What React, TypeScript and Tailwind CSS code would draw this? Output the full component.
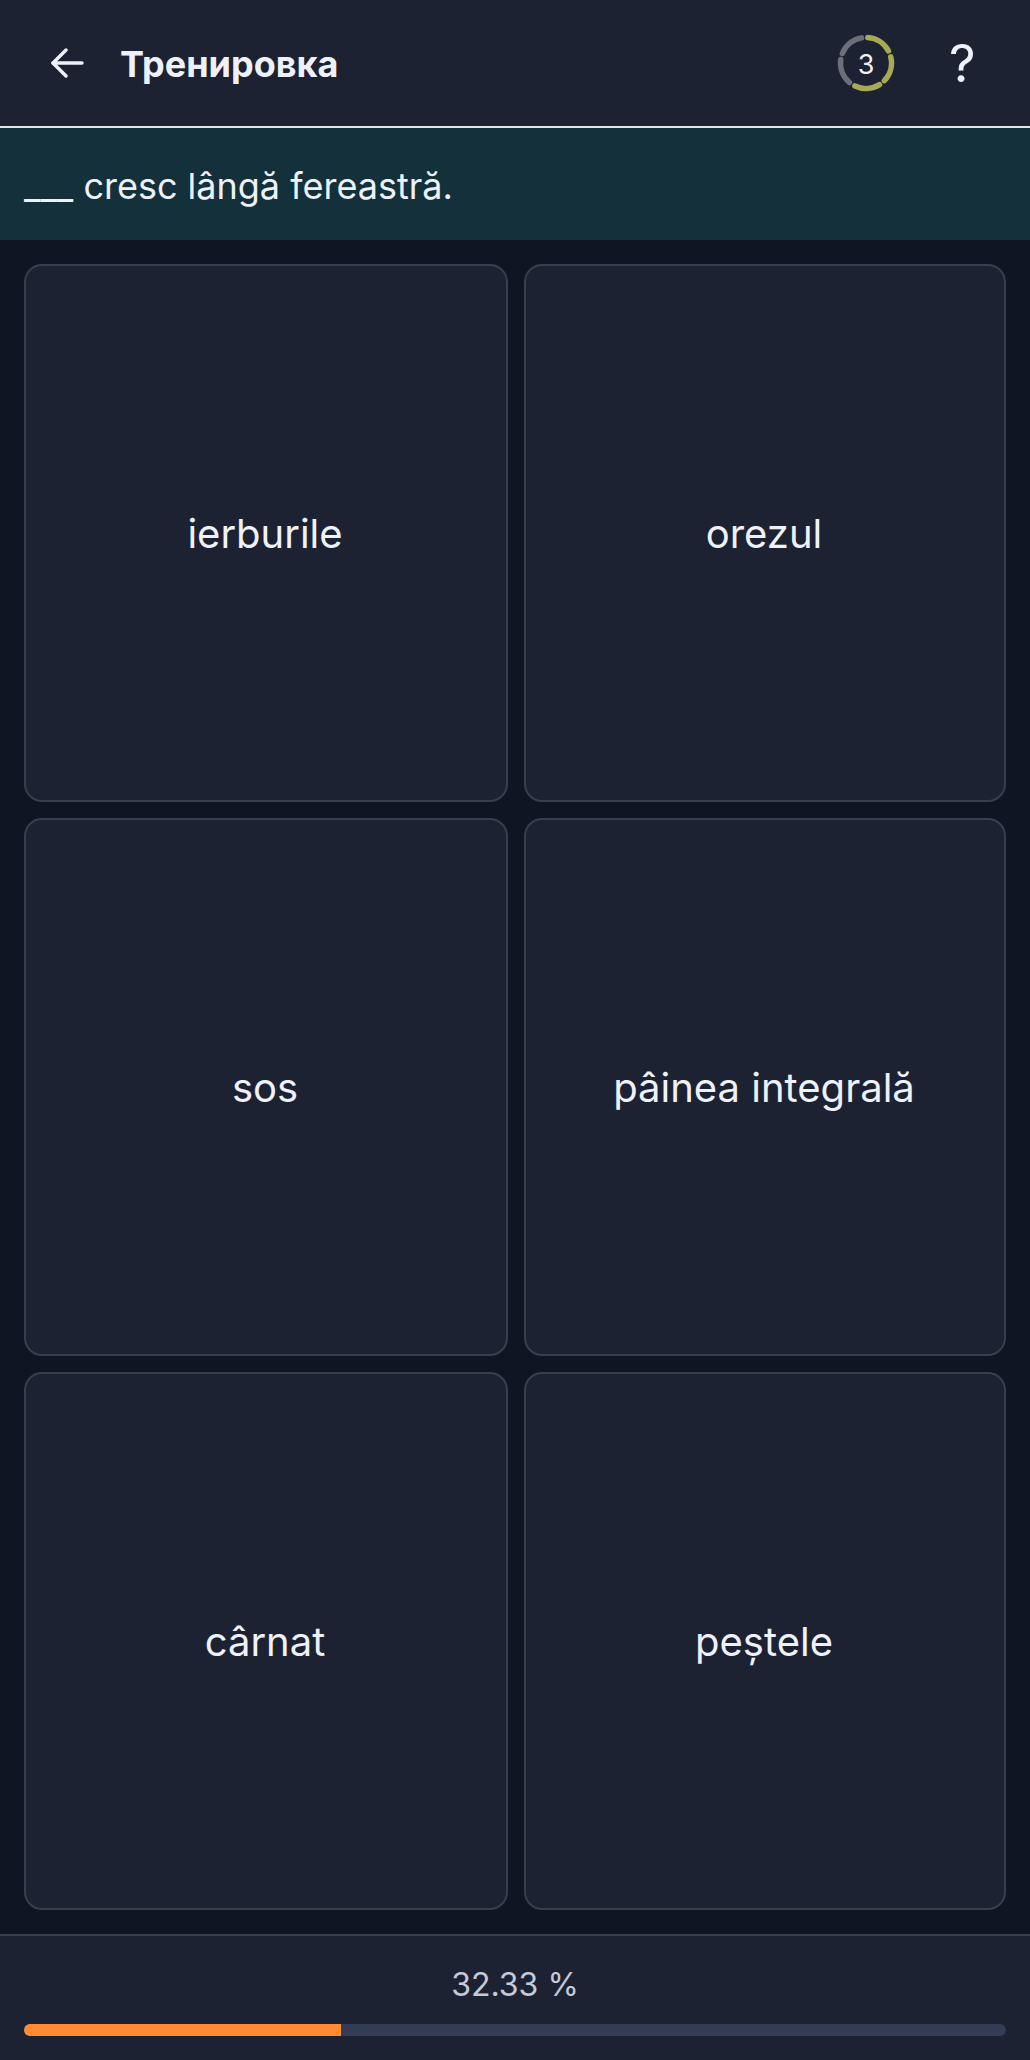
const answers = ['ierburile', 'orezul', 'sos', 'pâinea integrală', 'cârnat', 'peștele'];

// five ring segments, the first three are filled
const segments = [0, 1, 2, 3, 4];

function StreakRing() {
  return (
    <div className="relative flex h-[58px] w-[58px] items-center justify-center">
      <svg viewBox="0 0 58 58" className="absolute inset-0 h-full w-full" fill="none">
        {segments.map(i => (
          <circle
            key={i}
            cx="29"
            cy="29"
            r="25.5"
            strokeWidth="5.5"
            strokeLinecap="round"
            stroke={i < 3 ? '#a8a957' : '#6b6f7a'}
            strokeDasharray="25.5 134.7"
            transform={`rotate(${-86 + i * 72} 29 29)`}
          />
        ))}
      </svg>
      <span className="relative pt-0.5 text-[27px] leading-none text-[#eef1f8]">3</span>
    </div>
  );
}

export default function App() {
  return (
    <div className="flex h-[2060px] w-[1030px] flex-col bg-[#0f1523] font-['Inter',sans-serif] text-[#eef1f8] antialiased">
      {/* Header */}
      <div className="flex h-[128px] shrink-0 items-center border-b-2 border-[#e4e5e6] bg-[#1c2231] pl-[50px] pr-[55px]">
        <svg viewBox="0 0 34 30" className="h-[30px] w-[34px]" fill="none" stroke="#eef1f8" strokeWidth="3.4" strokeLinecap="round" strokeLinejoin="round">
          <path d="M32 15H3" />
          <path d="M16 2 3 15l13 13" />
        </svg>
        <h1 className="ml-[36px] pt-0.5 text-[36px] font-bold leading-none">Тренировка</h1>
        <div className="ml-auto flex items-center gap-[54px]">
          <StreakRing />
          <span className="w-[26px] pt-0.5 text-center text-[52px] font-[370] leading-none">?</span>
        </div>
      </div>

      {/* Prompt */}
      <div className="flex h-[112px] shrink-0 items-center bg-[#14303b] px-6 pt-1 text-[36px] font-[415]">
        ___ cresc lângă fereastră.
      </div>

      {/* Answers */}
      <div className="grid min-h-0 flex-1 grid-cols-[484px_1fr] grid-rows-3 gap-4 p-6">
        {answers.map(answer => (
          <button
            key={answer}
            className="flex items-center justify-center rounded-[18px] border-2 border-[#373e4d] bg-[#1c2231] pb-px pr-0.5 pt-[3px] text-[40px] font-[415] text-[#eef1f8]"
          >
            {answer}
          </button>
        ))}
      </div>

      {/* Progress */}
      <div className="flex h-[126px] shrink-0 flex-col items-center border-t-2 border-[#373e4d] bg-[#1c2231] px-6 pt-[29px]">
        <span className="text-[32px] leading-[40px] text-[#c5cad8]">32.33 %</span>
        <div className="mt-[19px] h-3 w-full overflow-hidden rounded-full bg-[#333c55]">
          <div className="h-full w-[32.33%] bg-[#ff8c33]" />
        </div>
      </div>
    </div>
  );
}
